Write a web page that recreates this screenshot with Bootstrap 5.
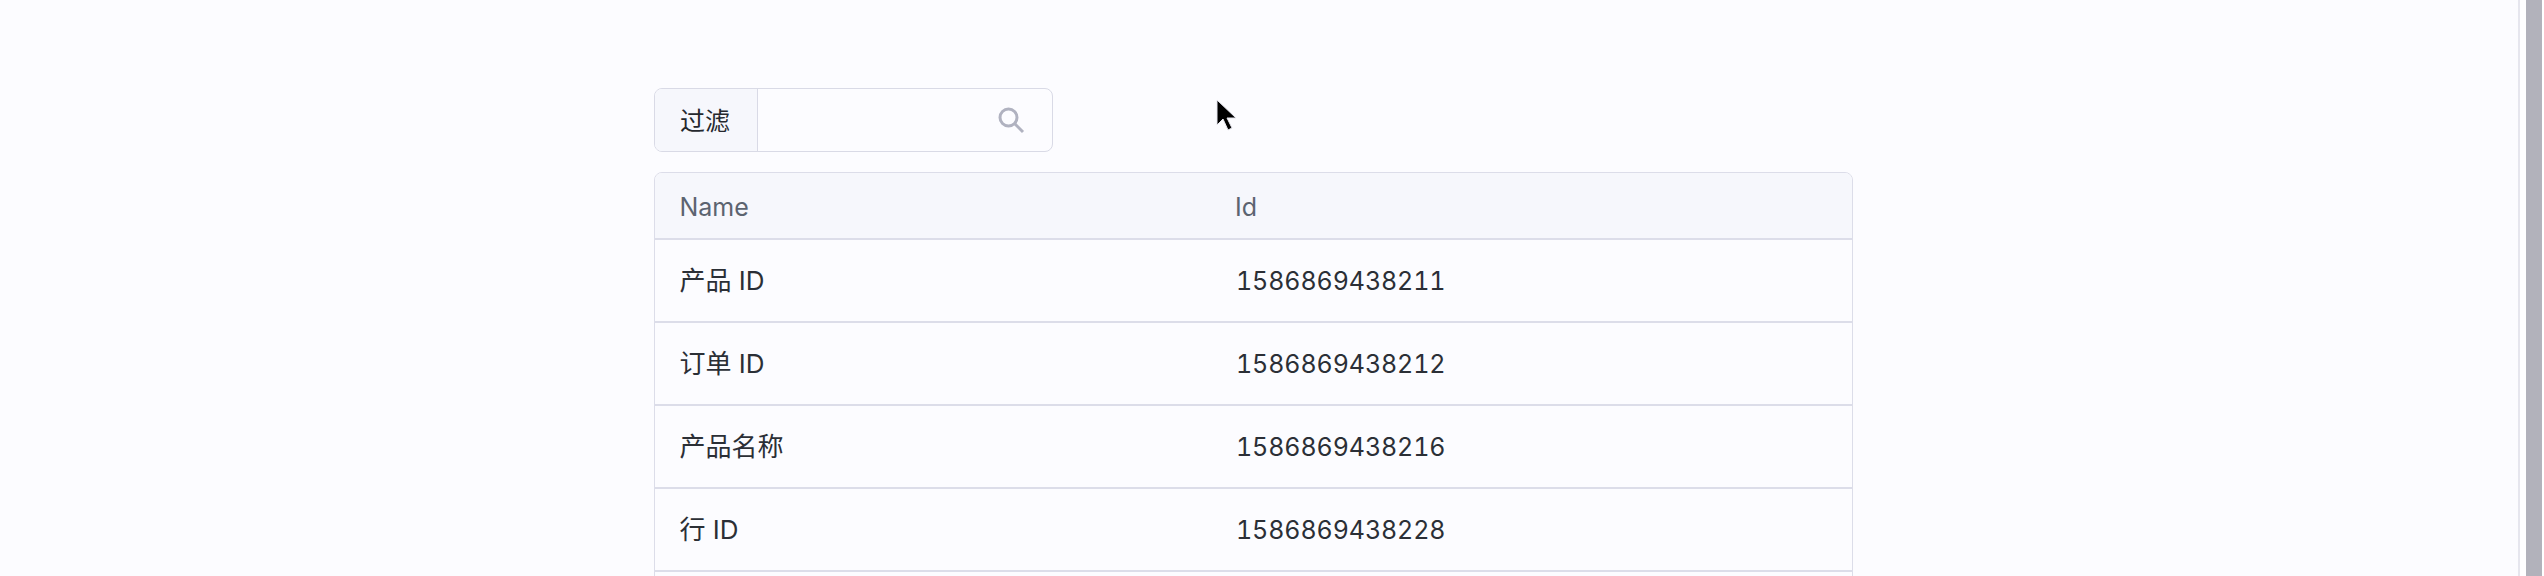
<!DOCTYPE html>
<html lang="zh">
<head>
<meta charset="utf-8">
<title>过滤</title>
<link href="https://cdn.jsdelivr.net/npm/bootstrap@5.3.0/dist/css/bootstrap.min.css" rel="stylesheet">
<style>
html,body{height:576px;overflow:hidden;background:#fcfcff}
body{font-family:Inter,"Noto Sans CJK SC",sans-serif;font-size:26px;color:#2b2f36}
.shell{height:576px}
.pane{width:1199px;margin-left:654px;padding-top:88px}
.filter-box{width:399px;height:64px;margin-bottom:20px;background:#fcfcff;border:1.5px solid #d9dae6;border-radius:8px;overflow:hidden}
.filter-label{flex:0 0 103px;background:#f6f7fc;border-right:1.5px solid #d9dae6;padding-left:25px;padding-top:3px;color:#25282e;font-size:25px}
.filter-input{background:transparent;border:0;outline:0;min-width:0;width:10px;padding:0}
.filter-icon{flex:0 0 28px;margin-right:27px;margin-top:-1px;width:28px;height:28px}
.data-grid{border:1.5px solid #dcdde9;border-radius:8px 8px 0 0;overflow:hidden;background:#fcfcff}
.grid-head{height:64.5px;padding-top:4px;background:#f6f7fc;color:#5c6470;font-size:25px}
.grid-row{height:83px;border-top:2px solid #dcdde9;padding-top:1px}
.cell-a{flex:0 0 555px;padding-left:24.5px}
.cell-b{padding-left:25px}
.num{font-size:25px;font-variant-numeric:tabular-nums;letter-spacing:-.1px;padding-left:26px;padding-top:2px}
.scroll-strip{width:26px;border-left:2px solid #e6e6ee;background:#fff;padding-left:6px;padding-right:2px}
.scroll-fill{background:#b2b2bb;height:100%}
.pointer{position:absolute;left:1214px;top:97px;width:24px;height:36px}
</style>
</head>
<body>
<div class="shell d-flex">
  <main class="flex-grow-1">
    <div class="pane">
      <div class="filter-box d-flex align-items-stretch">
        <div class="filter-label d-flex align-items-center">过滤</div>
        <input class="filter-input flex-grow-1" type="text" aria-label="过滤">
        <svg class="filter-icon align-self-center" viewBox="0 0 28 28" fill="none" stroke="#b0b2c0" stroke-width="3"><circle cx="11.5" cy="11.5" r="8.5"/><path d="M18 18l8 8"/></svg>
      </div>
      <div class="data-grid">
        <div class="grid-head d-flex align-items-center"><div class="cell-a">Name</div><div class="cell-b">Id</div></div>
        <div class="grid-row d-flex align-items-center"><div class="cell-a">产品 ID</div><div class="cell-b num">1586869438211</div></div>
        <div class="grid-row d-flex align-items-center"><div class="cell-a">订单 ID</div><div class="cell-b num">1586869438212</div></div>
        <div class="grid-row d-flex align-items-center"><div class="cell-a">产品名称</div><div class="cell-b num">1586869438216</div></div>
        <div class="grid-row d-flex align-items-center"><div class="cell-a">行 ID</div><div class="cell-b num">1586869438228</div></div>
        <div class="grid-row"></div>
      </div>
    </div>
  </main>
  <div class="scroll-strip"><div class="scroll-fill"></div></div>
</div>
<svg class="pointer" viewBox="0 0 24 36"><path d="M3 3v25l6-6 5 11 4-2-5-10h9z" fill="#000" stroke="#e6e6ee" stroke-width="1"/></svg>
</body>
</html>
